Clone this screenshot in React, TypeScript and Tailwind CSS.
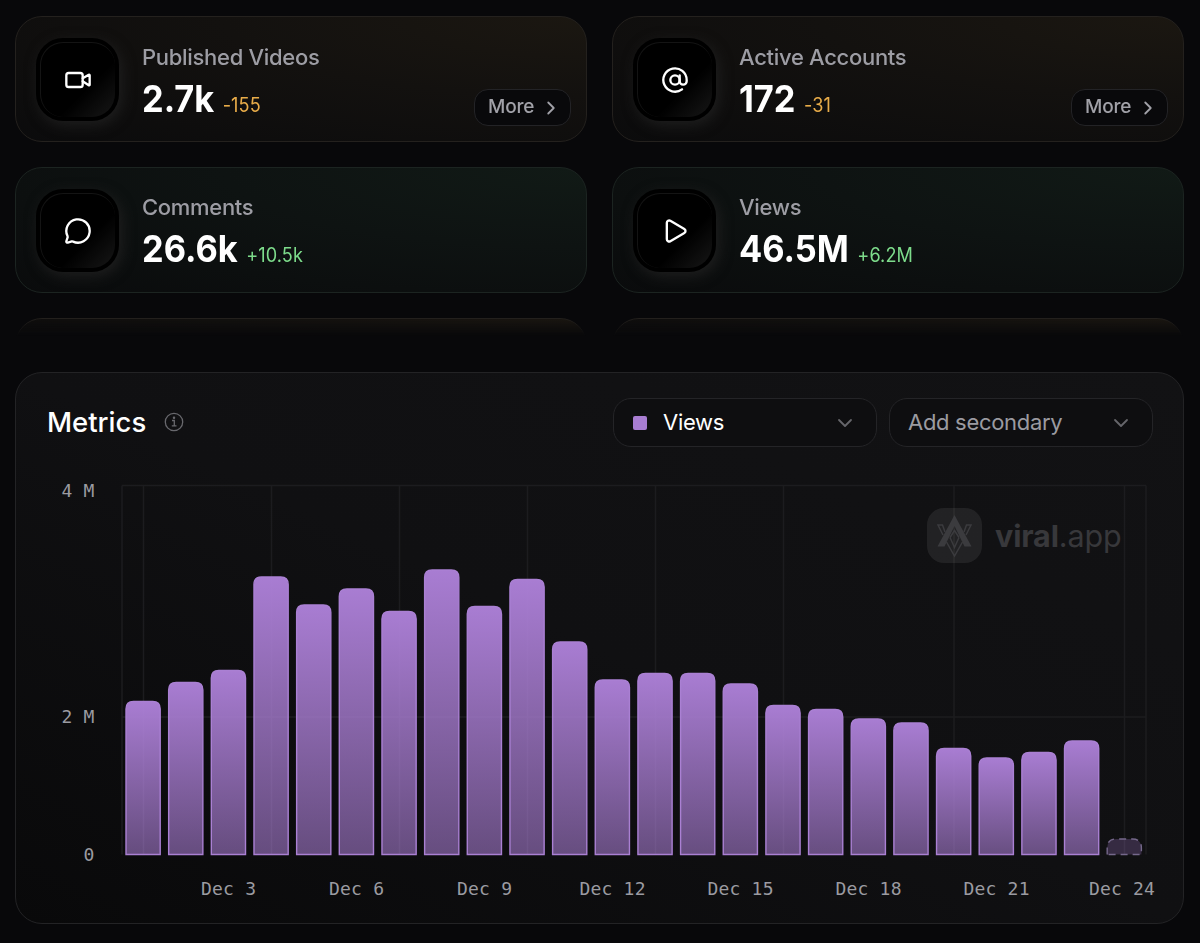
import { AtSign, ChevronDown, ChevronRight, MessageCircle, Play, Video } from "lucide-react";
import type { LucideIcon } from "lucide-react";

type Stat = {
  label: string;
  value: string;
  delta: string;
  tone: "amber" | "green";
  icon: LucideIcon;
  more?: boolean;
};

const stats: Stat[] = [
  { label: "Published Videos", value: "2.7k", delta: "-155", tone: "amber", icon: Video, more: true },
  { label: "Active Accounts", value: "172", delta: "-31", tone: "amber", icon: AtSign, more: true },
  { label: "Comments", value: "26.6k", delta: "+10.5k", tone: "green", icon: MessageCircle },
  { label: "Views", value: "46.5M", delta: "+6.2M", tone: "green", icon: Play },
];

const tones = {
  amber: {
    card: "border-[#24211e] bg-[radial-gradient(ellipse_at_top_right,#1b1711_0%,#13110f_45%,#0b0b0c_100%)]",
    delta: "text-[#e8ac49]",
  },
  green: {
    card: "border-[#1c2421] bg-[radial-gradient(ellipse_at_top_right,#111a16_0%,#0e1312_45%,#0a0b0c_100%)]",
    delta: "text-[#7ddc8b]",
  },
};

function StatCard({ stat }: { stat: Stat }) {
  const Icon = stat.icon;
  const tone = tones[stat.tone];

  return (
    <div className={`flex h-[126px] items-center rounded-[27px] border pr-[15px] pl-5 ${tone.card}`}>
      <div className="flex size-[83px] shrink-0 items-center justify-center rounded-[27px] bg-black shadow-[3px_4px_14px_#1f1f1f]">
        <div className="flex size-[75px] items-center justify-center rounded-[23px] border-t border-l border-[#141414] bg-[linear-gradient(135deg,#000_62%,#171717_100%)]">
          <Icon className="size-7 text-white" strokeWidth={2} />
        </div>
      </div>

      <div className={`ml-[23px] flex-1 ${stat.more ? "pt-[9px]" : "pt-[8px]"}`}>
        <p className="text-[22px] leading-[30px] font-medium tracking-[-0.3px] text-[#9d9da4]">{stat.label}</p>
        {/* Slightly condensed numerals */}
        <div className="mt-[6px] flex origin-left scale-x-[0.93] items-baseline gap-[9px] leading-[42px]">
          <span className="text-[37px] font-bold text-white">{stat.value}</span>
          <span className={`text-[19.5px] tracking-[0.1px] ${tone.delta}`}>{stat.delta}</span>
        </div>
      </div>

      {stat.more && (
        <button className="mb-[15px] flex h-[37px] w-[97px] items-center justify-between self-end rounded-[14px] border border-[#232326] bg-[#09090b] pr-2 pl-[13px] text-[19px] font-medium tracking-[-0.2px] text-[#a1a1a8]">
          More
          <ChevronRight className="size-[22px]" strokeWidth={2} />
        </button>
      )}
    </div>
  );
}

// Top edge of every bar, in chart coordinates
const barTops = [
  227.5, 208.5, 196.5, 103, 131, 115, 137.5, 96, 132.5, 105.5, 168, 206,
  199.5, 199.5, 210, 231.5, 235.5, 245, 249, 274.5, 284, 278.5, 267,
];
const base = 380.5;
const step = 42.66;
const gridX = [122, 143.5, 271.5, 399.5, 527.5, 655.5, 783.5, 954, 1124.5, 1146];

const xLabels = [
  { x: 228.6, text: "Dec 3" },
  { x: 356.6, text: "Dec 6" },
  { x: 484.6, text: "Dec 9" },
  { x: 612.6, text: "Dec 12" },
  { x: 740.6, text: "Dec 15" },
  { x: 868.6, text: "Dec 18" },
  { x: 996.6, text: "Dec 21" },
  { x: 1122, text: "Dec 24" },
];

function barPath(x: number, top: number, r: number) {
  const w = 34.2;
  return `M${x} ${base}V${top + r}Q${x} ${top} ${x + r} ${top}H${x + w - r}Q${x + w} ${top} ${x + w} ${top + r}V${base}Z`;
}

function Chart() {
  return (
    <svg viewBox="16 474 1167 448" className="block h-[448px] w-full font-['DejaVu_Sans_Mono',monospace]">
      <defs>
        <linearGradient id="bar" x1="0" y1="0" x2="0" y2="1">
          <stop offset="0" stopColor="#ad80d8" stopOpacity="0.97" />
          <stop offset="1" stopColor="#ad80d8" stopOpacity="0.56" />
        </linearGradient>
      </defs>

      {/* Grid */}
      <g stroke="#1c1c1f" strokeWidth="1.5">
        {gridX.map((x) => (
          <line key={x} x1={x} x2={x} y1="485.5" y2="854.5" />
        ))}
        <line x1="122" x2="1146" y1="485.5" y2="485.5" />
        <line x1="122" x2="1146" y1="717" y2="717" />
      </g>

      {/* Watermark */}
      <g>
        <rect x="927" y="508" width="55" height="55" rx="17" fill="#fff" fillOpacity="0.075" />
        <path d="M954.500 515l17 31.500h-7l-10-20.500-10 20.500h-7z" fill="#3b3b3e" />
        <g fill="none" stroke="#3b3b3e" strokeWidth="1.500">
          <path d="M945 532l-2.500-7h-4.500l5 10M964 532l2.500-7h4.500l-5 10" />
          <path d="M946.500 542l8 14 8-14M950 537.500l4.500 10 4.500-10M950 537.500l4.500-7 4.500 7" />
        </g>
        <text x="995" y="547" fontSize="30.500" fill="#38383b" className="font-[Inter,sans-serif]" letterSpacing="-0.15">
          <tspan fontWeight="700">viral</tspan>
          <tspan>.app</tspan>
        </text>
      </g>

      {/* Bars */}
      <g transform="translate(0 474)" stroke="#aa80d3" strokeWidth="1.4">
        {barTops.map((top, i) => (
          <path key={i} d={barPath(126 + i * step, top, 7.5)} fill="url(#bar)" />
        ))}
        <path
          d={barPath(126 + 23 * step, 365, 9)}
          fill="#a87dd2"
          fillOpacity="0.25"
          stroke="#75688b"
          strokeDasharray="7 5"
        />
      </g>

      {/* Axis labels */}
      <g fill="#9b9ba1" fontSize="18" letterSpacing="0.2">
        <g textAnchor="end">
          <text x="94.500" y="497">4 M</text>
          <text x="94.500" y="723">2 M</text>
          <text x="94.500" y="860.5">0</text>
        </g>
        <g textAnchor="middle">
          {xLabels.map(({ x, text }) => (
            <text key={text} x={x} y="895">
              {text}
            </text>
          ))}
        </g>
      </g>
    </svg>
  );
}

function InfoIcon() {
  return (
    <svg viewBox="0 0 20 20" className="mb-px ml-[18px] size-5" fill="none" stroke="#68686d" strokeWidth="1.3">
      <circle cx="10" cy="10" r="8.700" />
      <path d="M8 8.500h2.300v5.200M7.800 13.800h4.700" />
      <circle cx="10" cy="5.800" r="0.600" fill="#68686d" />
    </svg>
  );
}

export default function App() {
  return (
    <div className="h-[943px] w-[1200px] overflow-hidden bg-[#08080a] pt-[16px] pr-[16px] pl-[15px] font-[Inter,sans-serif]">
      <div className="h-[320px] overflow-hidden [mask-image:linear-gradient(to_bottom,#000_302px,transparent_320px)]">
        <div className="grid grid-cols-2 gap-[25px]">
          {stats.map((stat) => (
            <StatCard key={stat.label} stat={stat} />
          ))}
          <div className={`h-[126px] rounded-[27px] border ${tones.amber.card}`} />
          <div className={`h-[126px] rounded-[27px] border ${tones.amber.card}`} />
        </div>
      </div>

      <section className="mt-9 h-[552px] rounded-[27px] border border-[#232325] bg-[linear-gradient(to_top_right,#09090a_0%,#101012_50%,#121214_100%)]">
        <div className="mb-[2px] flex h-[99px] items-center pr-[30px] pl-[31px]">
          <h2 className="pt-px text-[27.5px] font-medium text-white">Metrics</h2>
          <InfoIcon />
          <div className="ml-auto flex gap-3">
            <button className="flex h-[49px] w-[264px] items-center rounded-[18px] border border-[#242427] bg-[#0e0e10] pr-[19px] pl-[19px] text-[22px] tracking-[-0.3px] text-white">
              <span className="mr-4 size-[14px] rounded-[2px] bg-[#a87dd2]" />
              Views
              <ChevronDown className="ml-auto size-6 text-[#66666b]" strokeWidth={1.8} />
            </button>
            <button className="flex h-[49px] w-[264px] items-center rounded-[18px] border border-[#242427] bg-[#0e0e10] pr-[19px] pl-[18px] text-[22px] tracking-[-0.3px] text-[#9b9ba1]">
              Add secondary
              <ChevronDown className="ml-auto size-6 text-[#66666b]" strokeWidth={1.8} />
            </button>
          </div>
        </div>
        <Chart />
      </section>
    </div>
  );
}
